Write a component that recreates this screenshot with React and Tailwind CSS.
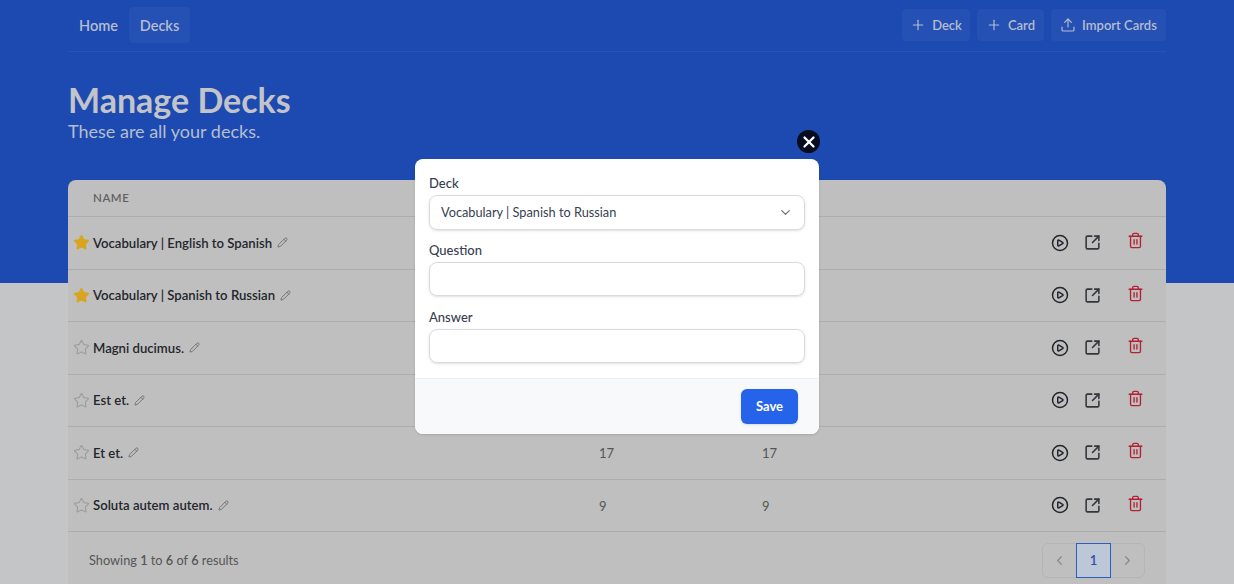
import { ChevronDown, ChevronLeft, ChevronRight, CirclePlay, Pencil, Plus, SquareArrowOutUpRight, Star, Trash2, Upload, X } from 'lucide-react';

// counts for the first rows are covered by the modal
const decks = [
  { name: 'Vocabulary | English to Spanish', starred: true },
  { name: 'Vocabulary | Spanish to Russian', starred: true },
  { name: 'Magni ducimus.', starred: false },
  { name: 'Est et.', starred: false },
  { name: 'Et et.', starred: false, cards: 17, due: 17 },
  { name: 'Soluta autem autem.', starred: false, cards: 9, due: 9 },
];

const NavAction = ({ icon: Icon, label, width }) => (
  <button className={`flex h-8 items-center justify-center gap-1.5 rounded bg-[#2550b4] text-[13px] font-semibold text-[#b5bdd0] ${width}`}>
    <Icon size={16} strokeWidth={1.75} />
    <span className="pt-[2px]">{label}</span>
  </button>
);

const DeckRow = ({ deck }) => (
  <div className="flex h-[52.5px] items-center border-t border-[#adadad]">
    <div className="flex w-[490px] items-center pl-[5px]">
      <Star
        size={17}
        className={deck.starred ? 'fill-[#d9a520] text-[#d9a520]' : 'text-[#9b9b9b]'}
        strokeWidth={1.5}
      />
      <span className="ml-[3px] pt-[2px] text-[13.15px] font-semibold text-[#23262c]">{deck.name}</span>
      <Pencil size={11} className="ml-[5px] text-[#707070]" />
    </div>
    <div className="w-[167px] pl-[41px] pt-[2px] text-[13px] text-[#555]">{deck.cards}</div>
    <div className="w-[318px] pl-[37px] pt-[2px] text-[13px] text-[#555]">{deck.due}</div>
    <div className="flex items-center">
      <CirclePlay size={18} strokeWidth={2} className="ml-[8px] text-[#23262c]" />
      <SquareArrowOutUpRight size={17} strokeWidth={2.2} className="ml-[15px] text-[#33363b]" />
      <Trash2 size={17} strokeWidth={1.9} className="ml-[26px] -mt-[4px] text-[#b32232]" />
    </div>
  </div>
);

const Field = ({ label, className, children }) => (
  <div className={className}>
    <label className="mb-[3px] block pt-[2px] text-[13px] font-medium leading-[18px] text-[#374151]">{label}</label>
    {children}
  </div>
);

export default function App() {
  return (
    <div className="relative h-[584px] overflow-hidden bg-[#c4c5c6] font-['Lato',sans-serif]">
      <div className="h-[283px] bg-[#1d4ab0]">
        <div className="mx-[68px]">
          <nav className="flex h-[52px] items-center justify-between border-b border-[#2852b5] pb-[2px]">
            <div className="flex items-center">
              <a className="flex h-9 w-[61px] items-center pl-[11px] pt-[2px] text-[14.5px] font-semibold text-[#b5bdd0]">Home</a>
              <a className="flex h-9 w-[61px] items-center justify-center rounded bg-[#2550b4] pt-[2px] text-[14.5px] font-semibold text-[#b5bdd0]">Decks</a>
            </div>
            <div className="flex items-center gap-[7px]">
              <NavAction icon={Plus} label="Deck" width="w-[68px]" />
              <NavAction icon={Plus} label="Card" width="w-[67px]" />
              <NavAction icon={Upload} label="Import Cards" width="w-[115px]" />
            </div>
          </nav>
          <h1 className="mt-[28px] text-[34px] font-bold leading-[40px] text-[#c2c4ca]">Manage Decks</h1>
          <p className="text-[18px] leading-[22px] text-[#b5bdd0]">These are all your decks.</p>
        </div>
      </div>

      <div className="mx-[68px] -mt-[103px] rounded-t-lg bg-[#bfbfbf]">
        <div className="flex h-[36px] items-center pl-[25px] text-[11.5px] font-semibold tracking-wider text-[#5f5f5f]">NAME</div>
        {decks.map((deck) => (
          <DeckRow key={deck.name} deck={deck} />
        ))}
        <div className="flex h-[60px] items-center justify-between border-t border-[#adadad] pl-[21px] pr-[21px] pb-[2px]">
          <p className="text-[12.75px] text-[#555]">
            Showing <b className="font-semibold">1</b> to <b className="font-semibold">6</b> of <b className="font-semibold">6</b> results
          </p>
          <div className="flex h-[35px] items-center rounded-md border border-[#b5b5b5]">
            <span className="flex w-[33px] justify-center text-[#8a8a8a]"><ChevronLeft size={15} /></span>
            <span className="flex h-[35px] w-[35px] items-center justify-center border border-[#2a5fc0] bg-[#bcc7d8] text-[13px] font-semibold text-[#2a50a8]">1</span>
            <span className="flex w-[33px] justify-center text-[#8a8a8a]"><ChevronRight size={15} /></span>
          </div>
        </div>
      </div>

      {/* modal sits over the dimmed page */}
      <div className="absolute inset-0 flex justify-center pt-[159px]">
        <div className="relative h-[275px] w-[404px] rounded-lg bg-white shadow">
          <button className="absolute -right-[1px] -top-[29px] flex h-[23px] w-[23px] items-center justify-center rounded-full bg-[#060d1f] text-white">
            <X size={18} strokeWidth={3} />
          </button>
          <div className="flex flex-col gap-[9px] px-[14px] pt-[13px]">
            <Field label="Deck">
              <div className="flex h-[35px] items-center justify-between rounded-lg border border-[#d8dade] pl-[11px] pr-[11px] text-[12.75px] text-[#374151] shadow-sm">
                <span>Vocabulary | Spanish to Russian</span>
                <ChevronDown size={15} className="text-[#6b7280]" />
              </div>
            </Field>
            <Field label="Question">
              <input className="block h-[34px] w-full rounded-lg border border-[#d8dade] shadow-sm" />
            </Field>
            <Field label="Answer" className="mt-px">
              <input className="block h-[34px] w-full rounded-lg border border-[#d8dade] shadow-sm" />
            </Field>
          </div>
          <div className="absolute inset-x-0 bottom-0 flex h-[56px] items-center justify-end rounded-b-lg border-t border-[#eff0f2] bg-[#f8f9fb] pr-[21px]">
            <button className="h-[35px] w-[57px] rounded-md bg-[#2563eb] text-[13px] font-bold text-white shadow-sm">Save</button>
          </div>
        </div>
      </div>
    </div>
  );
}
